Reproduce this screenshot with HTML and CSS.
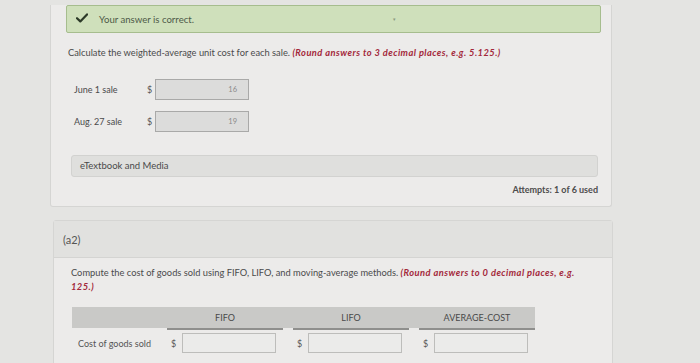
FILE: index.html
```html
<!DOCTYPE html>
<html>
<head>
<meta charset="utf-8">
<link rel="stylesheet" href="styles.css">
</head>
<body>
<div class="page">
  <section class="card card-first">
    <div class="notice">
      <svg class="check" viewBox="0 0 12 10" width="12" height="10"><path d="M1 5.2 L4.3 8.4 L11 1.4" fill="none" stroke="#2c3a28" stroke-width="2.2" stroke-linecap="round" stroke-linejoin="round"/></svg>
      <span>Your answer is correct.</span>
      <span class="mark">&#9662;</span>
    </div>
    <p class="question">Calculate the weighted-average unit cost for each sale. <em class="hint">(Round answers to 3 decimal places, e.g. 5.125.)</em></p>
    <div class="answers">
      <span class="label">June 1 sale</span><span class="dollar">$</span><span class="field filled">16</span>
      <span class="label">Aug. 27 sale</span><span class="dollar">$</span><span class="field filled">19</span>
    </div>
    <div class="media">eTextbook and Media</div>
    <div class="attempts">Attempts: 1 of 6 used</div>
  </section>

  <section class="card card-second">
    <div class="part-head">(a2)</div>
    <div class="part-body">
      <p class="question">Compute the cost of goods sold using FIFO, LIFO, and moving-average methods. <em class="hint">(Round answers to 0 decimal places, e.g.</em> <em class="hint">125.)</em></p>
      <div class="table">
        <div class="th blank"></div>
        <div class="th col gapfill">FIFO</div>
        <div class="th col gapfill">LIFO</div>
        <div class="th col">AVERAGE-COST</div>
        <div class="td label2">Cost of goods sold</div>
        <div class="td cell"><span class="dollar">$</span><span class="field empty"></span></div>
        <div class="td cell"><span class="dollar">$</span><span class="field empty"></span></div>
        <div class="td cell"><span class="dollar">$</span><span class="field empty"></span></div>
      </div>
    </div>
  </section>
</div>
</body>
</html>
```

FILE: styles.css
```css
* { box-sizing: border-box; }
html, body { margin: 0; padding: 0; }
body {
  width: 700px;
  height: 363px;
  overflow: hidden;
  background: #e4e4e2;
  font-family: Lato, "Open Sans", sans-serif;
  color: #4a4a4a;
}
.page {
  padding-left: 50px;
}
.card {
  background: #ecebea;
  border: 1px solid #d5d5d3;
}
.card-first {
  width: 562px;
  border-top: none;
  border-radius: 0 0 3px 3px;
  padding: 0 14px 10px 15px;
}
.notice {
  position: relative;
  margin-top: 5px;
  height: 28px;
  width: 535px;
  background: #cfe0bb;
  border: 1px solid #a6bd8e;
  border-radius: 2px;
  display: flex;
  align-items: center;
  padding-left: 9px;
  gap: 11px;
  font-size: 9.6px;
  color: #4e5a48;
}
.check { flex: none; margin-top: -3px; }
.mark {
  position: absolute;
  left: 326px;
  top: 10px;
  font-size: 5px;
  color: #8a9a80;
}
.question {
  margin: 13px 0 0 2px;
  font-size: 9.3px;
  line-height: 13px;
  color: #4a4a4a;
}
.hint {
  font-weight: 700;
  font-style: italic;
  color: #a3283a;
  letter-spacing: 0.45px;
}
.answers {
  display: grid;
  grid-template-columns: 73px 8px 94px;
  grid-auto-rows: 21px;
  row-gap: 11px;
  align-items: center;
  margin: 20px 0 0 8px;
  font-size: 9px;
}
.dollar {
  font-size: 9px;
  color: #555;
}
.field {
  display: block;
  height: 21px;
  border: 1px solid #a9a9a8;
  background: #dcdcdb;
  font-size: 7.5px;
  color: #8a8a8a;
  text-align: right;
  line-height: 19px;
  padding-right: 11px;
}
.media {
  margin: 23px 0 0 5px;
  width: 527px;
  height: 22px;
  background: #dfdfdd;
  border: 1px solid #d2d2d0;
  border-radius: 3px;
  font-size: 9.5px;
  line-height: 20px;
  padding-left: 8px;
  color: #4a4a4a;
}
.attempts {
  margin-top: 7px;
  width: 532px;
  text-align: right;
  font-size: 9px;
  line-height: 12px;
  font-weight: 700;
  color: #4c4c4c;
}
.card-second {
  margin: 13px 0 0 3px;
  width: 560px;
  height: 160px;
  border-radius: 3px 3px 0 0;
}
.part-head {
  height: 37px;
  background: #e1e1df;
  border-bottom: 1px solid #d4d4d2;
  padding-left: 9px;
  font-size: 11px;
  line-height: 38px;
  color: #555;
}
.part-body {
  padding: 8px 0 0 17px;
}
.part-body .question {
  margin: 0;
  width: 522px;
  font-size: 9.3px;
  line-height: 13.5px;
}
.table {
  margin: 14px 0 0 1px;
  display: grid;
  grid-template-columns: 85px 116px 116px 116px;
  column-gap: 10px;
  width: 463px;
}
.th {
  height: 23px;
  background: #c9c9c7;
  font-size: 9px;
  text-align: center;
  line-height: 21px;
  color: #4a4a4a;
}
.th.blank {
  height: 21px;
  margin-right: -10px;
}
.th.col {
  border-bottom: 2px solid #8f8f8d;
  position: relative;
}
.th.gapfill::after {
  content: "";
  position: absolute;
  top: 0;
  right: -10px;
  width: 10px;
  height: 21px;
  background: #c9c9c7;
}
.td { margin-top: 3px; height: 20px; display: flex; align-items: center; }
.label2 {
  font-size: 9px;
  padding-left: 6px;
  color: #555;
  white-space: nowrap;
}
.cell { gap: 6px; padding-left: 4px; }
.field.empty {
  width: 94px;
  height: 20px;
  background: #ebebea;
  border-color: #bdbdbb;
}
```
